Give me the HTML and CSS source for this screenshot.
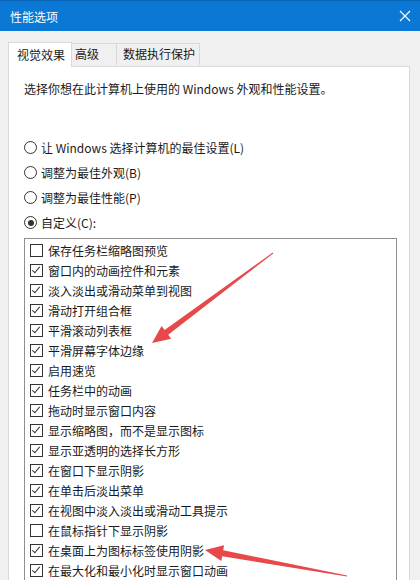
FILE: index.html
```html
<!DOCTYPE html>
<html lang="zh-CN">
  <head>
    <meta charset="UTF-8" />
    <title>性能选项</title>
    <link rel="stylesheet" href="styles.css">
  </head>
  <body>
    <div class="window">
      <div class="titlebar">
        <span class="title">性能选项</span>
        <svg class="close" width="12" height="12" viewBox="0 0 12 12">
          <path d="M1 1 L11 11 M11 1 L1 11" stroke="#fff" stroke-width="1.2" fill="none" />
        </svg>
      </div>

      <div class="tabs">
        <div class="tab tab-active">视觉效果</div>
        <div class="tab tab-adv">高级</div>
        <div class="tab tab-dep">数据执行保护</div>
      </div>

      <div class="panel">
        <p class="desc">选择你想在此计算机上使用的 Windows 外观和性能设置。</p>

        <div class="radios">
          <label class="radio-row"><span class="radio"></span>让 Windows 选择计算机的最佳设置(L)</label>
          <label class="radio-row"><span class="radio"></span>调整为最佳外观(B)</label>
          <label class="radio-row"><span class="radio"></span>调整为最佳性能(P)</label>
          <label class="radio-row"><span class="radio checked"></span>自定义(C):</label>
        </div>

        <ul class="listbox">
          <li><span class="check"></span>保存任务栏缩略图预览</li>
          <li><span class="check on"></span>窗口内的动画控件和元素</li>
          <li><span class="check on"></span>淡入淡出或滑动菜单到视图</li>
          <li><span class="check on"></span>滑动打开组合框</li>
          <li><span class="check on"></span>平滑滚动列表框</li>
          <li><span class="check on"></span>平滑屏幕字体边缘</li>
          <li><span class="check on"></span>启用速览</li>
          <li><span class="check on"></span>任务栏中的动画</li>
          <li><span class="check on"></span>拖动时显示窗口内容</li>
          <li><span class="check on"></span>显示缩略图，而不是显示图标</li>
          <li><span class="check on"></span>显示亚透明的选择长方形</li>
          <li><span class="check on"></span>在窗口下显示阴影</li>
          <li><span class="check on"></span>在单击后淡出菜单</li>
          <li><span class="check on"></span>在视图中淡入淡出或滑动工具提示</li>
          <li><span class="check"></span>在鼠标指针下显示阴影</li>
          <li><span class="check on"></span>在桌面上为图标标签使用阴影</li>
          <li><span class="check on"></span>在最大化和最小化时显示窗口动画</li>
        </ul>
      </div>

      <!-- red annotation arrows drawn over the dialog -->
      <svg class="arrows" width="420" height="580" viewBox="0 0 420 580">
        <polygon fill="#e5383b" opacity="0.92"
          points="273.3,253.4 168.2,334.7 171.2,338.7 152,343 161.6,325.9 164.6,329.9 272.7,252.6" />
        <polygon fill="#e5383b" opacity="0.92"
          points="347.1,575.5 223.2,550.3 224.1,545.3 205,550 221.3,561.1 222.2,556.2 346.9,576.5" />
      </svg>
    </div>
  </body>
</html>
```

FILE: styles.css
```css
/* Dialog */
body {
  margin: 0;
  padding: 0;
  background-color: #f0f0f0;
  font-family: "Noto Sans CJK SC", "Noto Sans", sans-serif;
  font-size: 12px;
  color: #1a1a1a;
}

.window {
  position: relative;
  width: 420px;
  height: 580px;
  overflow: hidden;
  background-color: #f0f0f0;
}

/* Title bar */
.titlebar {
  display: flex;
  align-items: center;
  justify-content: space-between;
  height: 30px;
  padding: 0 9px 0 10px;
  background-color: #0a78d4;
  border-top: 1px solid #0864b4;
  color: #fff;
}

.title {
  font-size: 12px;
}

/* Tabs */
.tabs {
  display: flex;
  align-items: flex-end;
  margin: 10px 0 0 8px;
  height: 25px;
  position: relative;
  z-index: 2;
}

.tab {
  box-sizing: border-box;
  height: 22px;
  line-height: 20px;
  border: 1px solid #d9d9d9;
  border-bottom: none;
  background-color: #f0f0f0;
  margin-bottom: 1px;
}

.tab-active {
  width: 64px;
  height: 25px;
  line-height: 24px;
  padding-left: 8px;
  background-color: #fff;
  margin-bottom: -1px;
}

.tab-adv {
  width: 45px;
  padding-left: 3px;
  border-left: none;
}

.tab-dep {
  width: 83px;
  padding-left: 6px;
  border-left: none;
}

/* Panel */
.panel {
  box-sizing: border-box;
  width: 402px;
  height: 540px;
  margin-left: 8px;
  padding: 14px 0 0 15px;
  background-color: #fff;
  border: 1px solid #d9d9d9;
}

.desc {
  margin: 0;
  height: 16px;
  line-height: 16px;
}

/* Radio buttons */
.radios {
  margin-top: 38px;
}

.radio-row {
  display: flex;
  align-items: center;
  height: 25px;
}

.radio {
  box-sizing: border-box;
  width: 13px;
  height: 13px;
  margin-right: 4px;
  border: 1px solid #333;
  border-radius: 50%;
  display: flex;
  align-items: center;
  justify-content: center;
}

.radio.checked::after {
  content: "";
  width: 6px;
  height: 6px;
  border-radius: 50%;
  background-color: #333;
}

/* Checkbox list */
.listbox {
  box-sizing: border-box;
  list-style: none;
  width: 373px;
  height: 400px;
  margin: 3px 0 0 0;
  padding: 1px 0 0 5px;
  border: 1px solid #8f8f8f;
  border-bottom: none;
}

.listbox li {
  display: flex;
  align-items: center;
  height: 20px;
}

.check {
  box-sizing: border-box;
  position: relative;
  width: 13px;
  height: 13px;
  margin-right: 5px;
  border: 1px solid #333;
  background-color: #fff;
}

.check.on::after {
  content: "";
  position: absolute;
  left: 3px;
  top: 0px;
  width: 3px;
  height: 7px;
  border-right: 1.3px solid #333;
  border-bottom: 1.3px solid #333;
  transform: rotate(40deg);
}

/* Annotation overlay */
.arrows {
  position: absolute;
  left: 0;
  top: 0;
  pointer-events: none;
  z-index: 5;
}
```
